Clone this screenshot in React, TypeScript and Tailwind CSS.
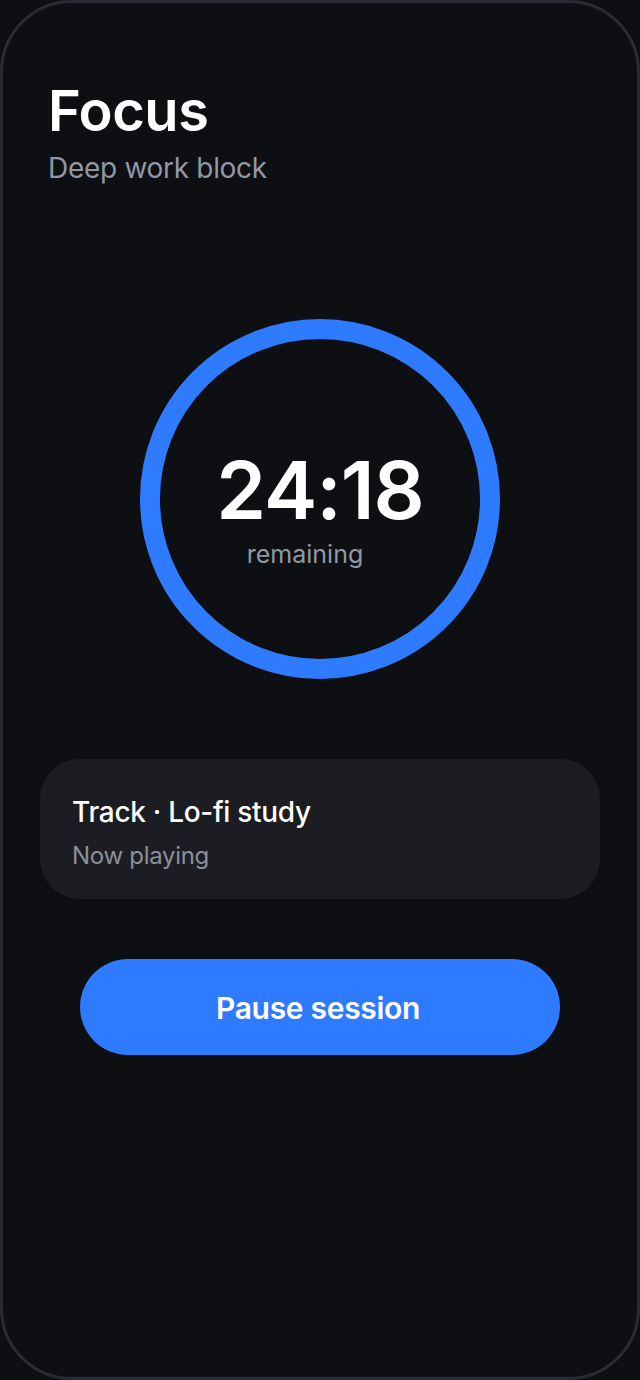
import React from "react";

export default function App() {
  return (
    <div className="w-[640px] h-[1380px] bg-[#0e0f13]" style={{ fontFamily: "Inter, 'Noto Sans', sans-serif" }}>
      <div className="w-full h-full rounded-[72px] border-[3px] border-[#2a2b33] bg-[#0e0f13] flex flex-col px-[37px]">
        <div className="pl-[8px] pt-[76px]">
          <h1 className="text-[56px] leading-[64px] font-semibold text-white tracking-[-0.5px]">Focus</h1>
          <p className="text-[28px] leading-[36px] text-[#9198a3] tracking-[-0.3px] mt-[7px]">Deep work block</p>
        </div>
        <div className="flex justify-center mt-[133px]">
          <div className="w-[360px] h-[360px] rounded-full border-[20px] border-[#2f7bff] flex flex-col items-center justify-center">
            <div className="text-[80px] leading-[80px] font-semibold text-white tracking-[-1px] mt-[21px]">24:18</div>
            <div className="text-[25px] leading-[30px] text-[#9198a3] mr-[30px] mt-[9px]">remaining</div>
          </div>
        </div>
        <div className="mt-[80px] h-[140px] rounded-[40px] bg-[#1c1d22] px-[32px] pt-[36px]">
          <div className="text-[28px] leading-[34px] font-medium text-white tracking-[-0.3px]">Track · Lo-fi study</div>
          <div className="text-[24px] leading-[30px] text-[#8a909b] mt-[12px] tracking-[-0.3px]">Now playing</div>
        </div>
        <div className="flex justify-center mt-[60px]">
          <button className="w-[480px] h-[96px] rounded-full bg-[#2f7bff] text-white text-[30px] font-semibold tracking-[-0.3px] pt-[3px] pr-[4px]">
            Pause session
          </button>
        </div>
      </div>
    </div>
  );
}
